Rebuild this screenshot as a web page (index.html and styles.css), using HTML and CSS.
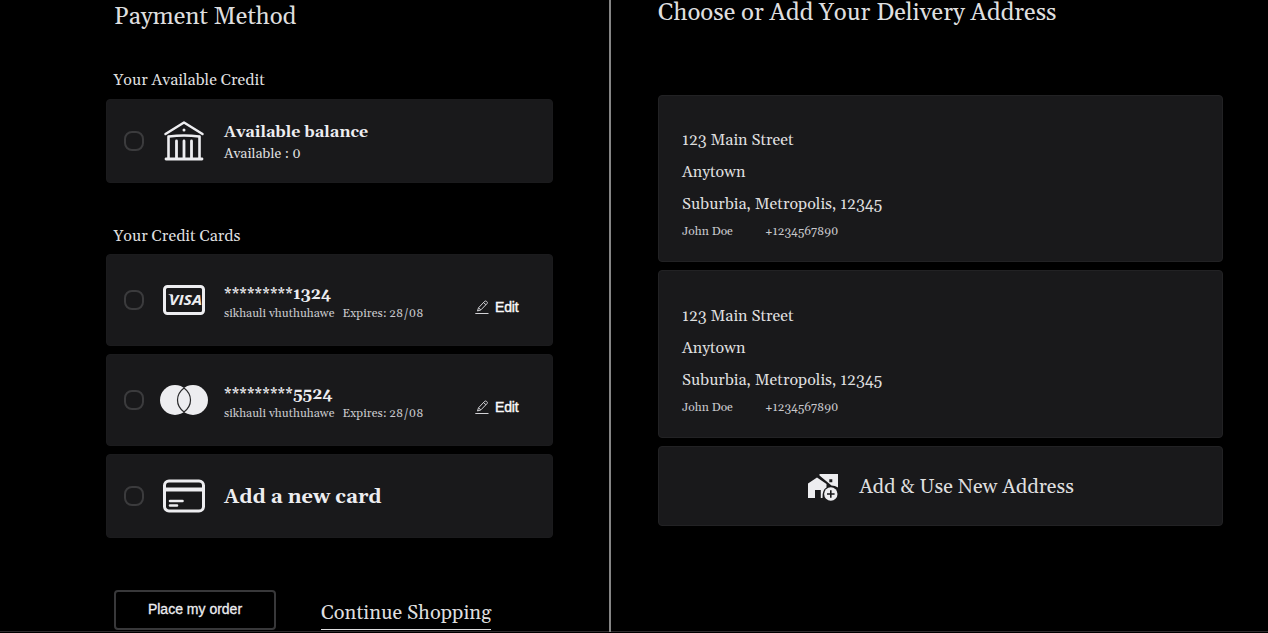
FILE: index.html
```html
<!DOCTYPE html>
<html lang="en">
<head>
<meta charset="utf-8">
<title>Checkout</title>
<link rel="stylesheet" href="styles.css">
</head>
<body>
<main class="checkout">
  <section class="payment">
    <h2 class="title">Payment Method</h2>
    <h3 class="label">Your Available Credit</h3>
    <div class="option balance">
      <span class="radio"></span>
      <svg class="icon" viewBox="0 0 48 48" fill="none" stroke="#ededf0" stroke-width="2.800" stroke-linecap="round" stroke-linejoin="round">
        <path d="M5.500 17 24 5.500 42.500 17" stroke-width="2.500"/><path d="M8.500 19.500V41M39.500 19.500V41M9 19.500Q24 17.500 39 19.500" stroke-width="2.600"/><path d="M16.500 24V41M24 24V41M31.500 24V41M6 42H42"/><circle cx="24" cy="13" r="1.500" fill="#ededf0" stroke="none"/>
      </svg>
      <div class="info"><strong class="name">Available balance</strong><span class="sub">Available : 0</span></div>
    </div>
    <h3 class="label cards-label">Your Credit Cards</h3>
    <div class="option card">
      <span class="radio"></span>
      <svg class="icon" viewBox="0 0 48 48"><rect x="4.500" y="10.500" width="39" height="27" rx="3" fill="none" stroke="#ededf0" stroke-width="3"/><text class="visa" x="9" y="29.300" textLength="33" lengthAdjust="spacingAndGlyphs">VISA</text><path d="M8 18.300H12.500L13.300 21Z" fill="#ededf0"/></svg>
      <div class="info"><strong class="name"><span class="stars">*********</span>1324</strong><span class="detail"><span>sikhauli vhuthuhawe</span><span>Expires: 28/08</span></span></div>
      <a class="edit"><svg class="pen" viewBox="0 0 14 14" fill="none" stroke="#d2d2d6"><path d="M2.500 11 3.500 7.800 9.700 1.300Q10.500.600 11.700 1.500 12.900 2.500 12.100 3.500L6 9.800ZM8.500 2.500 10.900 4.700M3.800 8 5.700 9.800M.300 13.500H13.500"/></svg>Edit</a>
    </div>
    <div class="option card">
      <span class="radio"></span>
      <svg class="icon" viewBox="0 0 48 48"><circle cx="15" cy="24" r="15" fill="#ededf0"/><circle cx="33" cy="24" r="15" fill="#ededf0"/><path d="M24 12Q30.500 17 30.500 24T24 36Q17.500 31 17.500 24T24 12Z" fill="none" stroke="#29292b" stroke-width="1.200"/></svg>
      <div class="info"><strong class="name"><span class="stars">*********</span>5524</strong><span class="detail"><span>sikhauli vhuthuhawe</span><span>Expires: 28/08</span></span></div>
      <a class="edit"><svg class="pen" viewBox="0 0 14 14" fill="none" stroke="#d2d2d6"><path d="M2.500 11 3.500 7.800 9.700 1.300Q10.500.600 11.700 1.500 12.900 2.500 12.100 3.500L6 9.800ZM8.500 2.500 10.900 4.700M3.800 8 5.700 9.800M.300 13.500H13.500"/></svg>Edit</a>
    </div>
    <div class="option new-card">
      <span class="radio"></span>
      <svg class="icon" viewBox="0 0 48 48" fill="none" stroke="#ededf0" stroke-width="3"><rect x="4.500" y="9" width="39" height="30" rx="4.500"/><path d="M4 17.500H44" stroke-width="4"/><path d="M10 29H22.500M10 33.500H17" stroke-width="2.600" stroke-linecap="round"/></svg>
      <strong class="add">Add a new card</strong>
    </div>
    <div class="actions"><button class="order">Place my order</button><a class="shopping">Continue Shopping</a></div>
  </section>
  <section class="delivery">
    <h2 class="title choose">Choose or Add Your Delivery Address</h2>
    <div class="address first"><span>123 Main Street</span><span>Anytown</span><span>Suburbia, Metropolis, 12345</span><div class="contact"><span>John Doe</span><span>+1234567890</span></div></div>
    <div class="address"><span>123 Main Street</span><span>Anytown</span><span>Suburbia, Metropolis, 12345</span><div class="contact"><span>John Doe</span><span>+1234567890</span></div></div>
    <div class="new-address">
      <svg class="house" viewBox="0 0 32 28"><path fill="#ededf0" fill-rule="evenodd" d="M12.500 1H31V14.500Q28 12.500 24.500 12.500L12.500 2.500ZM22.300 6.300V9.300H25.300V6.300ZM1 10.500 10 4.500 19.500 11V14.500Q15 17 15.500 25H13.800V17H8V25H1Z"/><circle cx="23.800" cy="21" r="6.700" fill="#ededf0"/><path d="M23.800 17.200V24.800M20 21H27.600" stroke="#19191b" stroke-width="1.600"/></svg>
      <span>Add &amp; Use New Address</span>
    </div>
  </section>
</main>
</body>
</html>
```
FILE: styles.css
```css
* { box-sizing: border-box; }
body { margin: 0; background: #000; color: #dededf; font-family: Gelasio, Georgia, "Liberation Serif", serif; }
.checkout { display: grid; grid-template-columns: 611px 1fr; height: 632px; border-bottom: 1px solid #302c2e; }
h2, h3 { margin: 0; font-weight: 400; white-space: nowrap; }
.payment { border-right: 2px solid #858585; padding: 1px 56px 0 106px; height: 632px; }
.title { font-size: 24px; line-height: 32px; }
.payment .title { padding-left: 8px; }
.label { font-size: 16px; line-height: 24px; margin: 35px 0 7px 7.5px; }
.label.cards-label { margin-top: 41px; margin-bottom: 6px; }
.option { display: flex; align-items: center; background: #19191b; border: 1px solid #1b1b1d; border-radius: 4px; padding-left: 17px; white-space: nowrap; }
.balance, .new-card { height: 84px; }
.card { height: 92px; margin-bottom: 8px; }
.radio { width: 20px; height: 20px; border: 2px solid #3b3b3d; border-radius: 8px; }
.icon { width: 48px; height: 48px; margin: 0 16px; }
.visa { font: italic 700 15px "Open Sans", sans-serif; fill: #ededf0; }
.info { display: flex; flex-direction: column; width: 244px; padding-top: 3px; }
.name { font-size: 16px; line-height: 22px; color: #ededf0; }
.stars { display: inline-block; width: 69px; font-weight: 400; letter-spacing: .1px; }
.sub { font-size: 14px; line-height: 22px; }
.detail { display: flex; gap: 8px; font-size: 12px; line-height: 16px; padding-top: 1px; color: #c8c8cc; }
.card .info { padding-top: 4px; }
.edit { display: flex; align-items: center; gap: 6px; margin: 14px 0 0 7px; font: 400 14px "Liberation Sans", sans-serif; letter-spacing: -.15px; color: #fafafa; -webkit-text-stroke: .4px; }
.pen { width: 14px; height: 14px; }
.add { font-size: 20px; padding-top: 1px; color: #ededf0; }
.actions { display: flex; margin: 52px 0 0 8px; gap: 45px; }
.order { width: 162px; height: 40px; padding: 0 0 2px; border: 2px solid #38383a; border-radius: 4px; background: #000; color: #ededf0; font: 400 14px "Liberation Sans", sans-serif; -webkit-text-stroke: .3px; }
.shopping { font-size: 20px; line-height: 31px; height: 32px; margin-top: 8px; border-bottom: 1px solid #dededf; white-space: nowrap; }
.delivery { padding: 0 45px 0 47px; }
.choose { height: 95px; line-height: 26px; }
.address { display: flex; flex-direction: column; height: 168px; padding: 29px 23px 0; margin-bottom: 8px; background: #19191b; border: 1px solid #222224; border-radius: 4px; font-size: 16px; line-height: 32px; }
.address.first { height: 167px; padding-top: 28px; }
.contact { display: flex; gap: 32px; font-size: 12px; line-height: 24px; color: #c8c8cc; }
.new-address { display: flex; align-items: center; justify-content: center; gap: 20px; height: 80px; padding-top: 2px; background: #19191b; border: 1px solid #222224; border-radius: 4px; font-size: 20px; }
.house { width: 32px; height: 28px; }
```
